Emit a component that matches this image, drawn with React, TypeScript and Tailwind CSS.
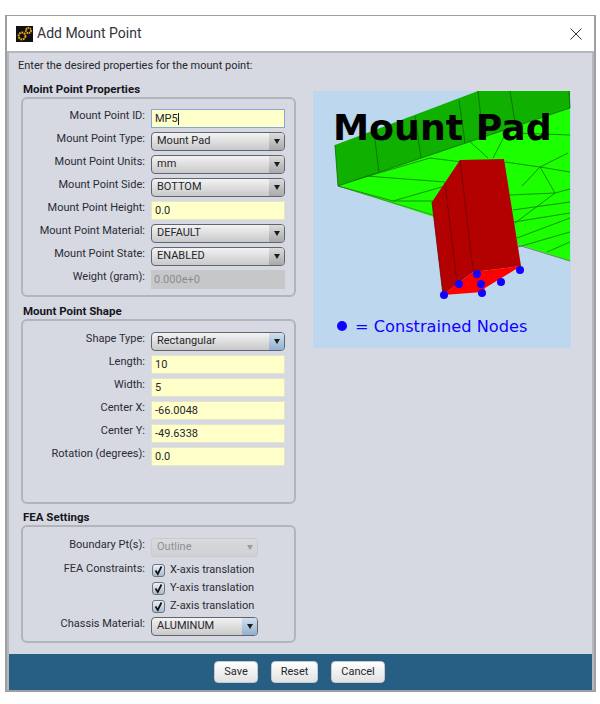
import type { ReactNode } from 'react';

const uiFont = { fontFamily: 'Roboto, "Open Sans", sans-serif' };

// Mesh lines on the bright green face, in picture coordinates
const meshLines = [
  'M338 186 L393 201',
  'M393 201 L445 186',
  'M393 201 L433 201',
  'M355 180 L430 158',
  'M366 176 L445 182',
  'M430 158 L462 162',
  'M468 140 L488 158',
  'M505 135 L493 158',
  'M505 162 L540 167 L568 153',
  'M540 167 L570 172',
  'M540 167 L522 186',
  'M540 167 L555 193',
  'M517 133 L570 135',
  'M555 193 L570 189',
  'M510 195 L555 193',
  'M513 210 L570 202',
  'M514 222 L570 213',
  'M515 223 L555 193',
  'M517 238 L570 218',
  'M518 247 L570 232',
  'M547 252 L570 242',
];

function Label({ children }: { children: ReactNode }) {
  return <div className="-mt-[6px] w-[122px] shrink-0 text-right text-[11px] leading-[15px] text-[#2b2b33]">{children}</div>;
}

function Row({ label, children }: { label: string; children: ReactNode }) {
  return (
    <div className="flex h-[19px] items-center gap-[6px]">
      <Label>{label}</Label>
      {children}
    </div>
  );
}

function TextField({ value, focused, disabled }: { value: string; focused?: boolean; disabled?: boolean }) {
  if (disabled) {
    return <div className="flex h-[19px] w-[134px] items-center bg-[#c6c7c9] pt-[1px] pl-[3px] text-[11px] text-[#8b8d90]">{value}</div>;
  }
  return (
    <div
      className={
        focused
          ? 'flex h-[19px] w-[134px] items-center border border-[#86aacb] bg-[#ffffc9] pt-[1px] pl-[3px] text-[11px] text-[#26262c]'
          : 'flex h-[19px] w-[134px] items-center border border-[#e4e4c8] bg-[#ffffc9] pt-[1px] pl-[3px] text-[11px] text-[#26262c]'
      }>
      {value}
      {focused && <span className="h-[12px] w-px bg-[#222]" />}
    </div>
  );
}

function SelectField({
  value,
  narrow,
  blue,
  disabled,
}: {
  value: string;
  narrow?: boolean;
  blue?: boolean;
  disabled?: boolean;
}) {
  const width = narrow ? 'w-[107px]' : 'w-[134px]';
  if (disabled) {
    return (
      <div className={`flex h-[19px] ${width} items-center justify-between rounded-[3px] border border-[#c9cacd] bg-gradient-to-b from-[#d9dade] to-[#cfd0d3] pl-[5px] text-[11px] text-[#8e9094]`}>
        {value}
        <span className="flex h-full w-[15px] items-center justify-center">
          <span className="h-0 w-0 border-x-[3.5px] border-t-[5px] border-x-transparent border-t-[#9a9ca0]" />
        </span>
      </div>
    );
  }
  return (
    <div className={`flex h-[19px] ${width} items-center justify-between overflow-hidden rounded-[4px] border border-[#5f6670] bg-gradient-to-b from-[#f3f3f3] to-[#c9c9c9] pl-[5px] text-[11px] text-[#26262c]`}>
      {value}
      <span
        className={
          blue
            ? 'flex h-full w-[15px] items-center justify-center bg-gradient-to-b from-[#d3e1ee] to-[#8fb0cf]'
            : 'flex h-full w-[15px] items-center justify-center bg-gradient-to-b from-[#dcdcdc] to-[#a9a9a9]'
        }>
        <span className="h-0 w-0 border-x-[3.5px] border-t-[5px] border-x-transparent border-t-[#1c1c1c]" />
      </span>
    </div>
  );
}

function CheckRow({ label }: { label: string }) {
  return (
    <div className="flex h-[18px] items-center gap-[5px] pl-[129px]">
      <span className="flex h-[13px] w-[13px] items-center justify-center rounded-[3px] border border-[#6a7482] bg-gradient-to-b from-[#eef1f5] to-[#a9bace]">
        <svg width="11" height="11" viewBox="0 0 11 11">
          <path d="M2.5 5.5 L4.8 9 L8.5 1.5" fill="none" stroke="#111" strokeWidth="1.7" />
        </svg>
      </span>
      <span className="text-[11px] text-[#2b2b33]">{label}</span>
    </div>
  );
}

function GroupBox({ heading, height, gapTop, children }: { heading: string; height: string; gapTop: string; children: ReactNode }) {
  return (
    <section className={gapTop}>
      <h3 className="h-[14px] pl-[2px] text-[11.5px] leading-[13px] font-bold text-[#16161c]">{heading}</h3>
      <div className={`${height} rounded-[6px] border-2 border-[#b1b4ba] bg-[#d6d9e2]`}>{children}</div>
    </section>
  );
}

function Picture() {
  return (
    <svg width="258" height="257" viewBox="313 91 258 257" className="shrink-0">
      <rect x="313" y="91" width="258" height="257" fill="#bdd7ee" />
      <path d="M338 186 L570 108 L570 261 Z" fill="#1cff00" />
      <path d="M478 91 L570 91 L570 108 L338 186 L335 145 Z" fill="#10b000" />
      <g stroke="#0c7a08" strokeWidth="0.8" fill="none">
        {meshLines.map((d) => (
          <path key={d} d={d} />
        ))}
        <path d="M478 91 L481 119 M510 91 L515 122 M569 91 L570 108 M374 132 L379 172 M415 116 L421 158 M459 100 L465 143 M335 145 L338 186 M338 186 L570 108" stroke="#0a6a06" />
      </g>
      <path d="M338 186 L433 215 M518 245 L570 261" stroke="#4a7a40" strokeWidth="0.8" fill="none" />
      <path d="M443 295 L473 272 L521 266 L485 288 L483 292 Z" fill="#ff0000" />
      <path d="M432 202 L460 160 L504 159 L521 266 L473 272 L443 295 Z" fill="#b30000" />
      <path d="M445 183 L457 283 M460 160 L473 270 M432 202 L443 295" stroke="#6d0505" strokeWidth="0.8" fill="none" />
      <g fill="#1400ff">
        <circle cx="444" cy="295" r="4" />
        <circle cx="459" cy="284" r="4" />
        <circle cx="477" cy="274" r="4" />
        <circle cx="481" cy="284" r="4" />
        <circle cx="482" cy="293" r="4" />
        <circle cx="501" cy="282" r="4" />
        <circle cx="520" cy="270" r="4" />
        <circle cx="342" cy="326" r="5" />
      </g>
      <text x="333" y="140" fontFamily='"DejaVu Sans", sans-serif' fontWeight="700" fontSize="36.3" fill="#000">
        Mount Pad
      </text>
      <text x="355" y="332" fontFamily='"DejaVu Sans", sans-serif' fontSize="16.2" fill="#1400ff">
        = Constrained Nodes
      </text>
    </svg>
  );
}

export default function App() {
  return (
    <div className="h-[704px] w-[600px] overflow-hidden bg-white pt-[15px] pl-[5px]" style={uiFont}>
      <div className="flex h-[677px] w-[591px] flex-col border-2 border-t-[1px] border-[#9d9fa3] bg-white">
        {/* Title bar */}
        <div className="flex h-[35px] shrink-0 items-center justify-between pr-[12px] pl-[9px]">
          <div className="flex items-center gap-[4px]">
            <svg width="17" height="16" viewBox="0 0 17 16">
              <rect width="17" height="16" fill="#111" />
              <circle cx="6" cy="10" r="3.4" fill="none" stroke="#f0a818" strokeWidth="2" strokeDasharray="1.8 0.7" />
              <circle cx="12.5" cy="4.5" r="2.6" fill="none" stroke="#f0a818" strokeWidth="1.8" strokeDasharray="1.6 0.6" />
            </svg>
            <span className="text-[14px] text-[#33333a]">Add Mount Point</span>
          </div>
          <svg width="12" height="12" viewBox="0 0 12 12">
            <path d="M0.5 0.5 L11.5 11.5 M11.5 0.5 L0.5 11.5" stroke="#333" strokeWidth="1" />
          </svg>
        </div>

        <div className="flex min-h-0 flex-1 flex-col border-t-2 border-r-2 border-l-2 border-[#b4b7bd] bg-[#d6d9e2]">
          <div className="flex-1 pl-[9px]">
            <p className="h-[28px] pt-[5px] text-[11px] leading-[15px] text-[#26262c]">Enter the desired properties for the mount point:</p>
            <div className="flex items-start gap-[17px] pl-[3px]">
              <div className="w-[275px] shrink-0">
                <GroupBox heading="Moint Point Properties" height="h-[200px]" gapTop="mt-[2px]">
                  <div className="flex flex-col gap-[4px] pt-[10px]">
                    <Row label="Mount Point ID:"><TextField value="MP5" focused /></Row>
                    <Row label="Mount Point Type:"><SelectField value="Mount Pad" /></Row>
                    <Row label="Mount Point Units:"><SelectField value="mm" /></Row>
                    <Row label="Mount Point Side:"><SelectField value="BOTTOM" /></Row>
                    <Row label="Mount Point Height:"><TextField value="0.0" /></Row>
                    <Row label="Mount Point Material:"><SelectField value="DEFAULT" /></Row>
                    <Row label="Mount Point State:"><SelectField value="ENABLED" /></Row>
                    <Row label="Weight (gram):"><TextField value="0.000e+0" disabled /></Row>
                  </div>
                </GroupBox>
                <GroupBox heading="Mount Point Shape" height="h-[185px]" gapTop="mt-[8px]">
                  <div className="flex flex-col gap-[4px] pt-[11px]">
                    <Row label="Shape Type:"><SelectField value="Rectangular" blue /></Row>
                    <Row label="Length:"><TextField value="10" /></Row>
                    <Row label="Width:"><TextField value="5" /></Row>
                    <Row label="Center X:"><TextField value="-66.0048" /></Row>
                    <Row label="Center Y:"><TextField value="-49.6338" /></Row>
                    <Row label="Rotation (degrees):"><TextField value="0.0" /></Row>
                  </div>
                </GroupBox>
                <GroupBox heading="FEA Settings" height="h-[118px]" gapTop="mt-[7px]">
                  <div className="pt-[11px]">
                    <Row label="Boundary Pt(s):"><SelectField value="Outline" narrow disabled /></Row>
                    <div className="mt-[4px] flex h-0 items-start">
                      <div className="pt-[6px]"><Label>FEA Constraints:</Label></div>
                    </div>
                    <div className="flex flex-col">
                      <CheckRow label="X-axis translation" />
                      <CheckRow label="Y-axis translation" />
                      <CheckRow label="Z-axis translation" />
                    </div>
                    <div className="mt-[2px]">
                      <Row label="Chassis Material:"><SelectField value="ALUMINUM" narrow blue /></Row>
                    </div>
                  </div>
                </GroupBox>
              </div>
              <div className="mt-[10px]"><Picture /></div>
            </div>
          </div>

          {/* Footer buttons */}
          <div className="flex h-[36px] shrink-0 items-center justify-center gap-[13px] bg-[#265f83] pr-[2px]">
            {['Save', 'Reset', 'Cancel'].map((label) => (
              <button
                key={label}
                className={
                  label === 'Save'
                    ? 'h-[22px] w-[44px] rounded-[4px] border border-[#c5c9cf] bg-gradient-to-b from-white to-[#e2e2e2] text-[11px] text-[#26262c]'
                    : label === 'Reset'
                      ? 'h-[22px] w-[47px] rounded-[4px] border border-[#c5c9cf] bg-gradient-to-b from-white to-[#e2e2e2] text-[11px] text-[#26262c]'
                      : 'h-[22px] w-[54px] rounded-[4px] border border-[#c5c9cf] bg-gradient-to-b from-white to-[#e2e2e2] text-[11px] text-[#26262c]'
                }>
                {label}
              </button>
            ))}
          </div>
        </div>
      </div>
    </div>
  );
}
